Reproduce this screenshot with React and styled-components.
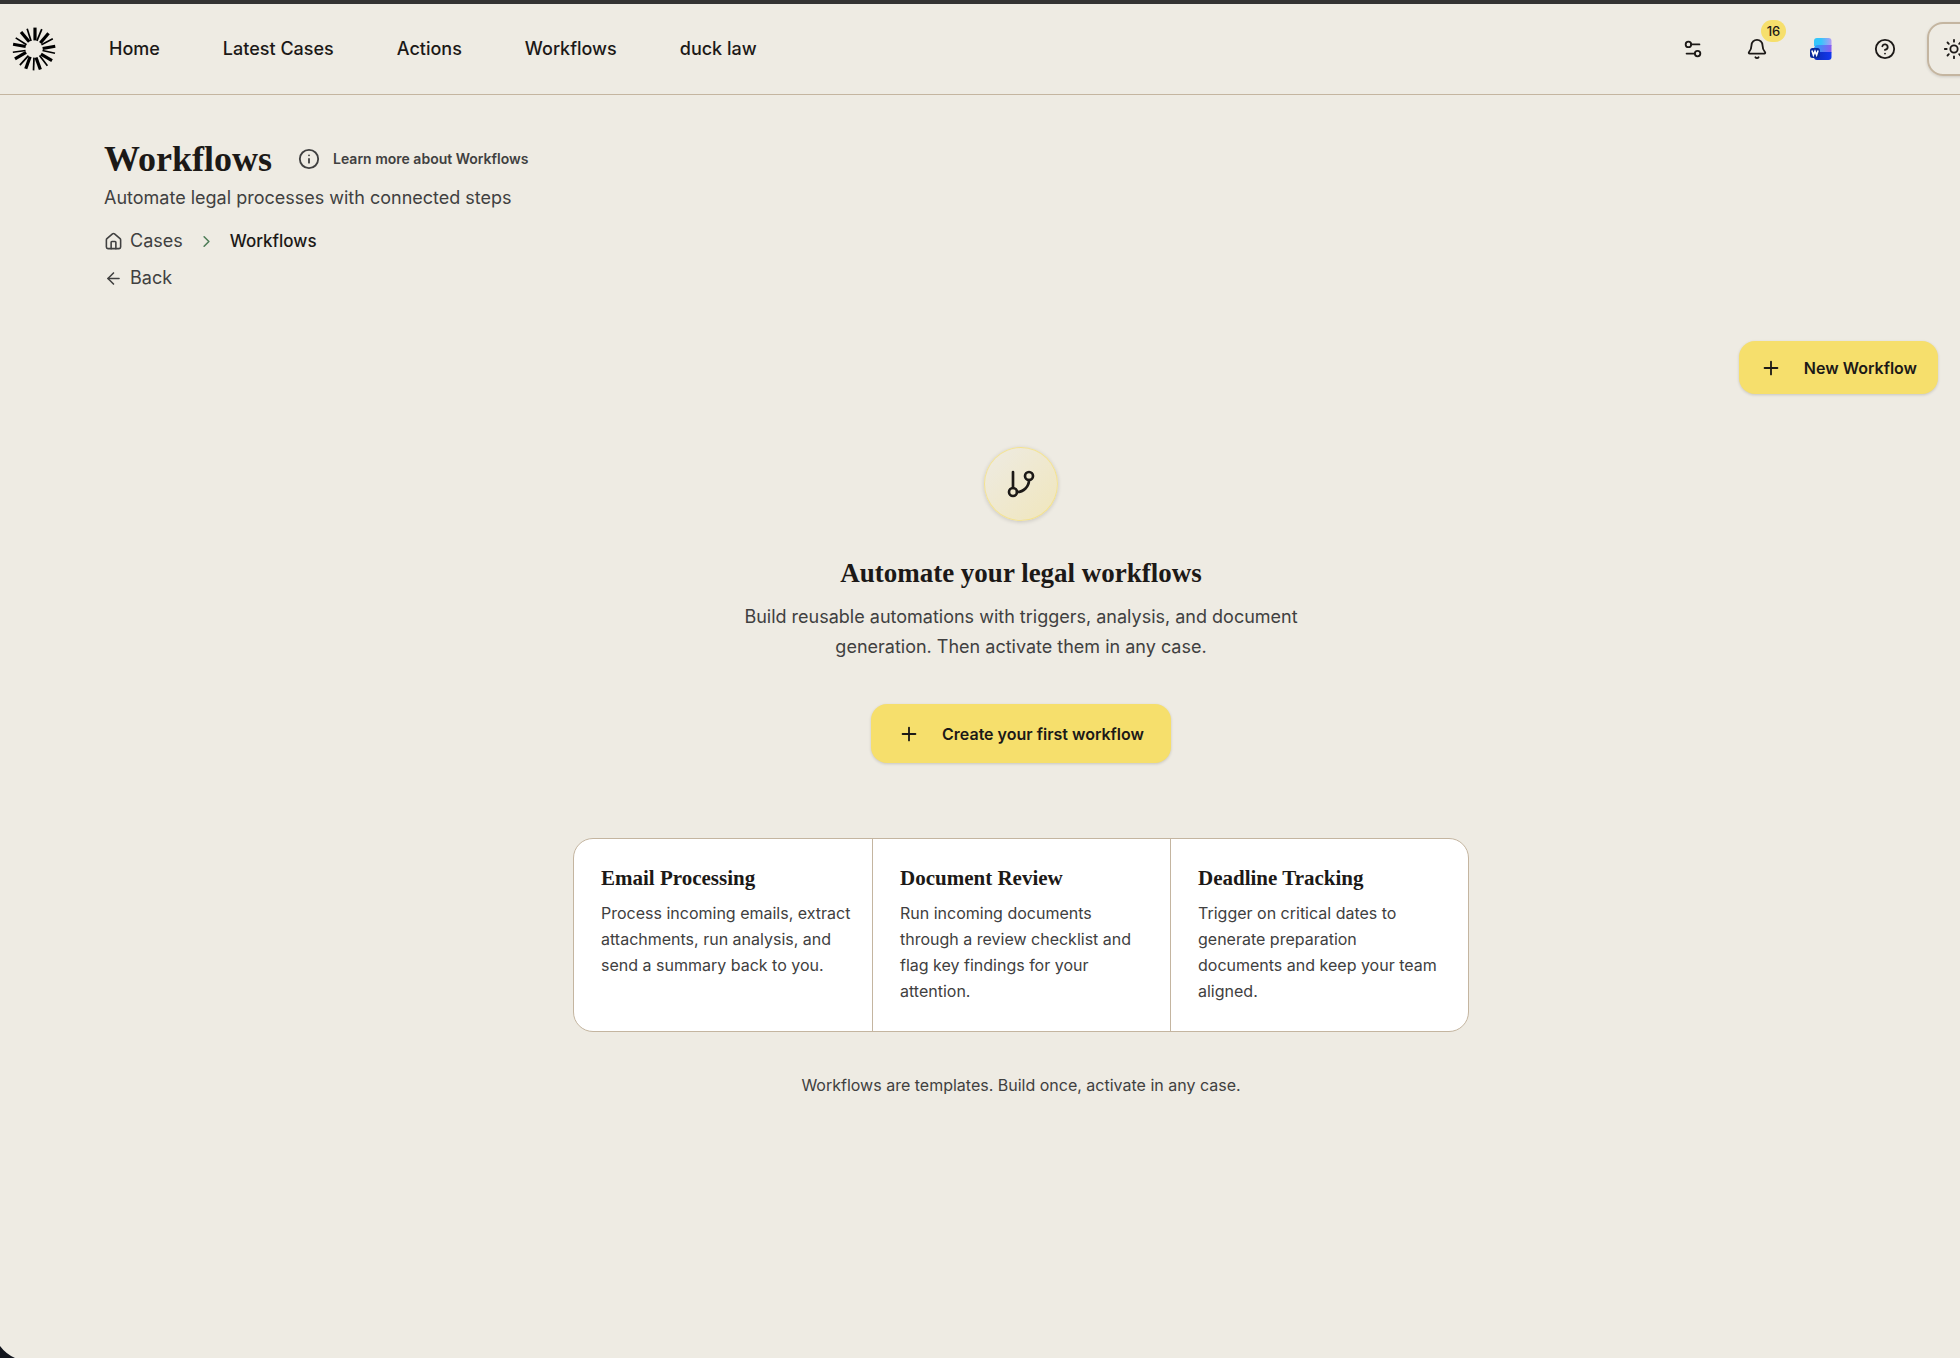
import React from "react";
import styled, { createGlobalStyle } from "styled-components";
import {
  ArrowLeft,
  Bell,
  ChevronRight,
  CircleHelp,
  GitBranch,
  House,
  Info,
  Plus,
  Settings2,
  Sun,
} from "lucide-react";

const colors = {
  page: "#eeebe3",
  line: "#c4b5a0",
  ink: "#1c1917",
  muted: "#404040",
  accent: "#f6df6c",
  frame: "#333333",
};

const sans = `Inter, "Liberation Sans", sans-serif`;
const serif = `"Liberation Serif", "Times New Roman", serif`;

const GlobalStyle = createGlobalStyle`
  *, *::before, *::after { box-sizing: border-box; }
  body {
    margin: 0;
    background: ${colors.page};
    color: ${colors.ink};
    font-family: ${sans};
    font-size: 16px;
  }
  h1, h2, h3, p, ul, ol { margin: 0; padding: 0; }
  ul, ol { list-style: none; }
  a { color: inherit; text-decoration: none; }
  button { font: inherit; color: inherit; border: 0; background: none; padding: 0; cursor: pointer; }
  svg { display: block; flex: none; }
`;

const Page = styled.div`
  position: relative;
  display: flex;
  flex-direction: column;
  min-height: 100vh;
  border-top: 4px solid ${colors.frame};
  overflow: hidden;
`;

const Header = styled.header`
  display: flex;
  align-items: center;
  height: 91px;
  padding-left: 12px;
  border-bottom: 1px solid ${colors.line};
`;

const NavList = styled.ul`
  display: flex;
  gap: 63px;
  margin-left: 53px;
`;

const NavLink = styled.a`
  font-size: 18px;
  line-height: 28px;
  font-weight: 500;
  white-space: nowrap;
`;

const Tools = styled.div`
  display: flex;
  align-items: center;
  gap: 20px;
  margin-left: auto;
  margin-right: -21px;
`;

const IconButton = styled.button`
  position: relative;
  display: grid;
  place-items: center;
  width: 44px;
  height: 44px;
`;

const ThemeButton = styled(IconButton)`
  width: 54px;
  height: 54px;
  border: 2px solid ${colors.line};
  border-radius: 16px;
  box-shadow: 0 1px 3px rgba(0, 0, 0, 0.14);
`;

const Badge = styled.span`
  position: absolute;
  top: -7px;
  right: -7px;
  height: 22px;
  min-width: 25px;
  padding: 0 5px;
  border-radius: 11px;
  background: ${colors.accent};
  font-size: 13px;
  line-height: 22px;
  font-weight: 500;
  text-align: center;
`;

const Main = styled.main`
  display: flex;
  flex-direction: column;
  padding: 43px 22px 60px 104px;
`;

const TitleRow = styled.div`
  display: flex;
  align-items: center;
  gap: 26px;
`;

const Title = styled.h1`
  font-family: ${serif};
  font-size: 36px;
  line-height: 42px;
  font-weight: 700;
`;

const LearnMore = styled.a`
  display: flex;
  align-items: center;
  gap: 13px;
  color: ${colors.muted};
  font-size: 14px;
  line-height: 24px;
  font-weight: 600;
`;

const Subtitle = styled.p`
  margin-top: 3px;
  color: ${colors.muted};
  font-size: 18px;
  line-height: 30px;
`;

const Crumbs = styled.ol`
  display: flex;
  align-items: center;
  gap: 14px;
  margin-top: 13px;
  line-height: 30px;
`;

const Crumb = styled.li`
  display: flex;
  align-items: center;
  gap: 14px;
  font-size: ${(p) => (p.$current ? "17px" : "18px")};
  font-weight: ${(p) => (p.$current ? 500 : 400)};

  > svg { color: #4d7c57; }
`;

const TextLink = styled.a`
  display: flex;
  align-items: center;
  align-self: flex-start;
  gap: 7px;
  color: ${colors.muted};
  font-size: 18px;
  line-height: 30px;
`;

const BackLink = styled(TextLink)`
  margin-top: 7px;
`;

const PrimaryButton = styled.button`
  display: flex;
  align-items: center;
  gap: 22px;
  height: ${(p) => (p.$large ? "59px" : "53px")};
  padding: ${(p) => (p.$large ? "0 27px" : "0 21px")};
  border-radius: 16px;
  background: ${colors.accent};
  box-shadow: 0 1px 3px rgba(0, 0, 0, 0.16);
  font-size: 16px;
  font-weight: 600;
  white-space: nowrap;
`;

const Actions = styled.div`
  display: flex;
  justify-content: flex-end;
  margin-top: 48px;
`;

const EmptyState = styled.section`
  display: flex;
  flex-direction: column;
  align-items: center;
  margin-top: 53px;
  text-align: center;
`;

const EmptyIcon = styled.div`
  display: grid;
  place-items: center;
  width: 74px;
  height: 74px;
  border: 1px solid rgba(246, 223, 108, 0.6);
  border-radius: 50%;
  background: linear-gradient(135deg, #eeebe3, #f0e6bc);
  box-shadow: 0 1px 4px rgba(0, 0, 0, 0.16);
`;

const EmptyTitle = styled.h2`
  margin-top: 34px;
  font-family: ${serif};
  font-size: 27px;
  line-height: 36px;
  font-weight: 700;
`;

const EmptyText = styled.p`
  max-width: 600px;
  margin: 11px 0 42px;
  color: ${colors.muted};
  font-size: 18px;
  line-height: 30px;
`;

const Cards = styled.ul`
  display: grid;
  grid-template-columns: repeat(3, 1fr);
  width: 100%;
  max-width: 896px;
  margin-top: 75px;
  border: 1px solid ${colors.line};
  border-radius: 20px;
  background: #fff;
  text-align: left;
`;

const Card = styled.li`
  padding: 24px 20px 27px 27px;

  & + & { border-left: 1px solid ${colors.line}; }
`;

const CardTitle = styled.h3`
  font-family: ${serif};
  font-size: 21px;
  line-height: 30px;
  font-weight: 700;
`;

const CardText = styled.p`
  margin-top: 7px;
  color: ${colors.muted};
  font-size: 16px;
  line-height: 26px;
  white-space: pre-line;
`;

const Footnote = styled.p`
  margin-top: 40px;
  color: ${colors.muted};
  font-size: 16px;
  line-height: 26px;
`;

const WindowCorner = styled.svg`
  position: absolute;
  left: 0;
  bottom: 0;
`;

function Logo() {
  const rays = Array.from({ length: 18 }, (_, i) => i);
  return (
    <svg width="44" height="44" viewBox="-22 -22 44 44" aria-hidden="true">
      {rays.map((i) => (
        <line
          key={i}
          x1={i % 2 ? 0 : 1}
          x2={i % 2 ? 0.5 : 1}
          y1="-8.6"
          y2="-21.4"
          stroke="#000"
          strokeWidth={i % 2 ? 1.7 : 3.2}
          transform={`rotate(${i * 20})`}
        />
      ))}
    </svg>
  );
}

function WordIcon() {
  return (
    <svg width="22" height="22" viewBox="0 0 22 22" aria-hidden="true">
      <defs>
        <linearGradient id="wordTop" x1="0" x2="1" y1="0" y2="0">
          <stop offset="0.4" stopColor="#35c6fb" />
          <stop offset="1" stopColor="#b49bf5" />
        </linearGradient>
        <linearGradient id="wordMid" x1="0" x2="1" y1="0" y2="0">
          <stop offset="0.1" stopColor="#2b9bfa" />
          <stop offset="1" stopColor="#8b5cf0" />
        </linearGradient>
        <linearGradient id="wordLow" x1="0" x2="1" y1="0" y2="0">
          <stop offset="0" stopColor="#0b2bb5" />
          <stop offset="1" stopColor="#1237f0" />
        </linearGradient>
      </defs>
      <path d="M7 0H18.5A3 3 0 0 1 21.5 3V8H4V3A3 3 0 0 1 7 0Z" fill="url(#wordTop)" />
      <path d="M4 11A4 4 0 0 1 8 7H21.5V14.5H4Z" fill="url(#wordMid)" />
      <path d="M4 14H21.5V19A3 3 0 0 1 18.500 22H7A3 3 0 0 1 4 19Z" fill="url(#wordLow)" />
      <rect x="0" y="10" width="10" height="10" rx="2.500" fill="#0a2a9c" />
      <path
        d="M1.900 12.400 3.400 17 5 13.200 6.600 17 8.100 12.400"
        fill="none"
        stroke="#fff"
        strokeWidth="1.600"
      />
    </svg>
  );
}

const navItems = ["Home", "Latest Cases", "Actions", "Workflows", "duck law"];

const examples = [
  {
    title: "Email Processing",
    text: "Process incoming emails, extract\nattachments, run analysis, and\nsend a summary back to you.",
  },
  {
    title: "Document Review",
    text: "Run incoming documents\nthrough a review checklist and\nflag key findings for your\nattention.",
  },
  {
    title: "Deadline Tracking",
    text: "Trigger on critical dates to\ngenerate preparation\ndocuments and keep your team\naligned.",
  },
];

export default function App() {
  return (
    <Page>
      <GlobalStyle />
      <Header>
        <a href="#home" aria-label="Main page">
          <Logo />
        </a>
        <nav>
          <NavList>
            {navItems.map((item) => (
              <li key={item}>
                <NavLink href="#">{item}</NavLink>
              </li>
            ))}
          </NavList>
        </nav>
        <Tools>
          <IconButton aria-label="Settings">
            <Settings2 size={22} strokeWidth={2} />
          </IconButton>
          <IconButton aria-label="Notifications">
            <Bell size={22} strokeWidth={2} />
            <Badge>16</Badge>
          </IconButton>
          <IconButton aria-label="Word add-in">
            <WordIcon />
          </IconButton>
          <IconButton aria-label="Help">
            <CircleHelp size={22} strokeWidth={2} />
          </IconButton>
          <ThemeButton aria-label="Theme">
            <Sun size={22} strokeWidth={2} />
          </ThemeButton>
        </Tools>
      </Header>

      <Main>
        <TitleRow>
          <Title>Workflows</Title>
          <LearnMore href="#learn">
            <Info size={22} strokeWidth={2} />
            Learn more about Workflows
          </LearnMore>
        </TitleRow>
        <Subtitle>Automate legal processes with connected steps</Subtitle>
        <nav aria-label="Breadcrumb">
          <Crumbs>
            <Crumb>
              <TextLink href="#cases">
                <House size={19} strokeWidth={2} />
                Cases
              </TextLink>
              <ChevronRight size={19} strokeWidth={2} />
            </Crumb>
            <Crumb $current aria-current="page">
              Workflows
            </Crumb>
          </Crumbs>
        </nav>
        <BackLink href="#back">
          <ArrowLeft size={19} strokeWidth={2} />
          Back
        </BackLink>

        <Actions>
          <PrimaryButton>
            <Plus size={22} strokeWidth={2} />
            New Workflow
          </PrimaryButton>
        </Actions>

        <EmptyState>
          <EmptyIcon>
            <GitBranch size={32} strokeWidth={2} />
          </EmptyIcon>
          <EmptyTitle>Automate your legal workflows</EmptyTitle>
          <EmptyText>
            Build reusable automations with triggers, analysis, and document generation. Then
            activate them in any case.
          </EmptyText>
          <PrimaryButton $large>
            <Plus size={22} strokeWidth={2} />
            Create your first workflow
          </PrimaryButton>
          <Cards>
            {examples.map((example) => (
              <Card key={example.title}>
                <CardTitle>{example.title}</CardTitle>
                <CardText>{example.text}</CardText>
              </Card>
            ))}
          </Cards>
          <Footnote>Workflows are templates. Build once, activate in any case.</Footnote>
        </EmptyState>
      </Main>
      <WindowCorner width="15" height="12" viewBox="0 0 15 12" aria-hidden="true">
        <path d="M0 0Q6 8 15 12H0Z" fill="#12151d" />
      </WindowCorner>
    </Page>
  );
}
